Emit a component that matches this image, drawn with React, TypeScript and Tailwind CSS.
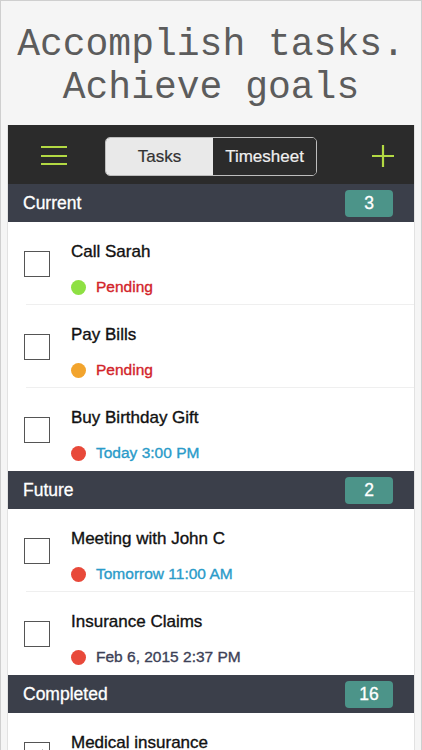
import React from "react";

type Task = {
  title: string;
  dot: string;
  status: string;
  statusColor: string;
  done?: boolean;
};

const sections: { name: string; count: number; tasks: Task[] }[] = [
  {
    name: "Current",
    count: 3,
    tasks: [
      { title: "Call Sarah", dot: "bg-[#8ee043]", status: "Pending", statusColor: "text-[#d2232a]" },
      { title: "Pay Bills", dot: "bg-[#f2a42d]", status: "Pending", statusColor: "text-[#d2232a]" },
      { title: "Buy Birthday Gift", dot: "bg-[#e8493a]", status: "Today 3:00 PM", statusColor: "text-[#2a9bc9]" },
    ],
  },
  {
    name: "Future",
    count: 2,
    tasks: [
      { title: "Meeting with John C", dot: "bg-[#e8493a]", status: "Tomorrow 11:00 AM", statusColor: "text-[#2a9bc9]" },
      { title: "Insurance Claims", dot: "bg-[#e8493a]", status: "Feb 6, 2015 2:37 PM", statusColor: "text-[#3d4157]" },
    ],
  },
  {
    name: "Completed",
    count: 16,
    tasks: [
      { title: "Medical insurance", dot: "bg-[#8ee043]", status: "Done", statusColor: "text-[#3d4157]", done: true },
    ],
  },
];

function Checkbox({ checked }: { checked?: boolean }) {
  return (
    <div className="w-[26px] h-[26px] border-[1.5px] border-[#555] bg-white flex items-center justify-center shrink-0">
      {checked && (
        <svg width="18" height="18" viewBox="0 0 18 18" fill="none">
          <path d="M3 9.5l4 4L15 4" stroke="#222" strokeWidth="1.6" />
        </svg>
      )}
    </div>
  );
}

function TaskRow({ task, last }: { task: Task; last: boolean }) {
  return (
    <div className="relative h-[83px] flex items-center pl-[16px]">
      <Checkbox checked={task.done} />
      <div className="ml-[21px] flex flex-col self-stretch [-webkit-text-stroke:0.35px_currentColor]">
        <div className="mt-[19px] h-[22px] flex items-center text-[17px] text-[#111]">{task.title}</div>
        <div className="mt-[14px] h-[20px] flex items-center">
          <span className={`w-[15px] h-[15px] rounded-full ${task.dot}`} />
          <span className={`ml-[10px] text-[15.5px] ${task.statusColor}`}>{task.status}</span>
        </div>
      </div>
      {!last && <div className="absolute left-[18px] right-0 bottom-0 h-px bg-[#efefef]" />}
    </div>
  );
}

export default function App() {
  return (
    <div
      className="w-[422px] h-[750px] overflow-hidden bg-[#f5f5f5] border-x border-t border-[#cfcfcf] flex flex-col"
      style={{ fontFamily: '"Liberation Sans", Arial, sans-serif' }}
    >
      <div
        className="h-[124px] shrink-0 pt-[22px] text-center text-[38px] leading-[43px] text-[#5c5c5c]"
        style={{ fontFamily: '"Liberation Mono", "Courier New", monospace' }}
      >
        <div>Accomplish tasks.</div>
        <div>Achieve goals</div>
      </div>

      <div className="mx-[6px] flex-1 bg-white border-x border-[#e2e2e2]">
        <div className="h-[59px] bg-[#2b2b2b] flex items-center pl-[33px]">
          <div className="flex flex-col gap-[6.5px] w-[26px] mt-[2px]">
            <span className="h-[2px] bg-[#b3d943]" />
            <span className="h-[2px] bg-[#b3d943]" />
            <span className="h-[2px] bg-[#b3d943]" />
          </div>
          <div className="ml-[38px] mt-[4px] w-[212px] h-[39px] flex rounded-[5px] border border-[#bdbdbd] overflow-hidden text-[17px] [-webkit-text-stroke:0.2px_currentColor]">
            <div className="w-[107px] bg-[#e9e9e9] text-[#333] flex items-center justify-center">Tasks</div>
            <div className="flex-1 bg-[#2b2b2b] text-[#f0f0f0] flex items-center justify-center">Timesheet</div>
          </div>
          <svg className="ml-[54px] mt-[2px]" width="24" height="24" viewBox="0 0 24 24">
            <path d="M12 1v22M1 12h22" stroke="#b3d943" strokeWidth="2.2" />
          </svg>
        </div>

        {sections.map((s) => (
          <div key={s.name}>
            <div className="h-[38px] bg-[#3b3f4a] flex items-center justify-between pl-[15px] pr-[21px] [-webkit-text-stroke:0.3px_currentColor]">
              <span className="text-[17.5px] text-white">{s.name}</span>
              <span className="w-[48px] h-[27px] rounded-[4px] bg-[#4c9489] text-white text-[17.5px] flex items-center justify-center">
                {s.count}
              </span>
            </div>
            {s.tasks.map((t, i) => (
              <TaskRow key={t.title} task={t} last={i === s.tasks.length - 1} />
            ))}
          </div>
        ))}
      </div>
    </div>
  );
}
